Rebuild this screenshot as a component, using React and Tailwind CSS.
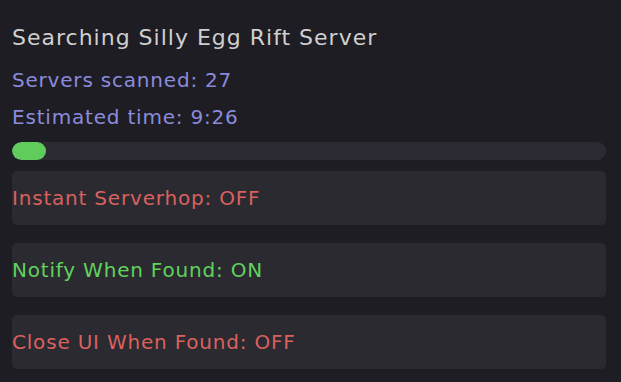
import React from "react";

const toggles = [
  { label: "Instant Serverhop", on: false },
  { label: "Notify When Found", on: true },
  { label: "Close UI When Found", on: false },
];

export default function App() {
  const progress = 5.7;

  return (
    <div
      className="w-[621px] h-[382px] bg-[#1e1d23] pl-3 pr-[15px] pt-[24px] overflow-hidden"
      style={{ fontFamily: '"DejaVu Sans", "Noto Sans", sans-serif' }}
    >
      <h1 className="text-[22px] leading-[28px] text-[#cfcfcf] tracking-[1px]">
        Searching Silly Egg Rift Server
      </h1>
      <p className="mt-[15px] text-[20px] leading-[26px] text-[#8b8bdc] tracking-[0.8px]">
        Servers scanned: 27
      </p>
      <p className="mt-[11px] text-[20px] leading-[26px] text-[#8b8bdc] tracking-[0.8px]">
        Estimated time: 9:26
      </p>

      <div className="mt-[12px] h-[18px] w-full rounded-full bg-[#2c2b33] overflow-hidden">
        <div
          className="h-full rounded-full bg-[#5fcc5c]"
          style={{ width: `${progress}%` }}
        />
      </div>

      <div className="mt-[11px] flex flex-col gap-[18px]">
        {toggles.map((t) => (
          <div
            key={t.label}
            className="h-[54px] flex items-center rounded-[5px] bg-[#2b2a31]"
          >
            <span
              className={`text-[20px] tracking-[0.8px] ${
                t.on ? "text-[#5fd35c]" : "text-[#d9615f]"
              }`}
            >
              {t.label}: {t.on ? "ON" : "OFF"}
            </span>
          </div>
        ))}
      </div>
    </div>
  );
}
